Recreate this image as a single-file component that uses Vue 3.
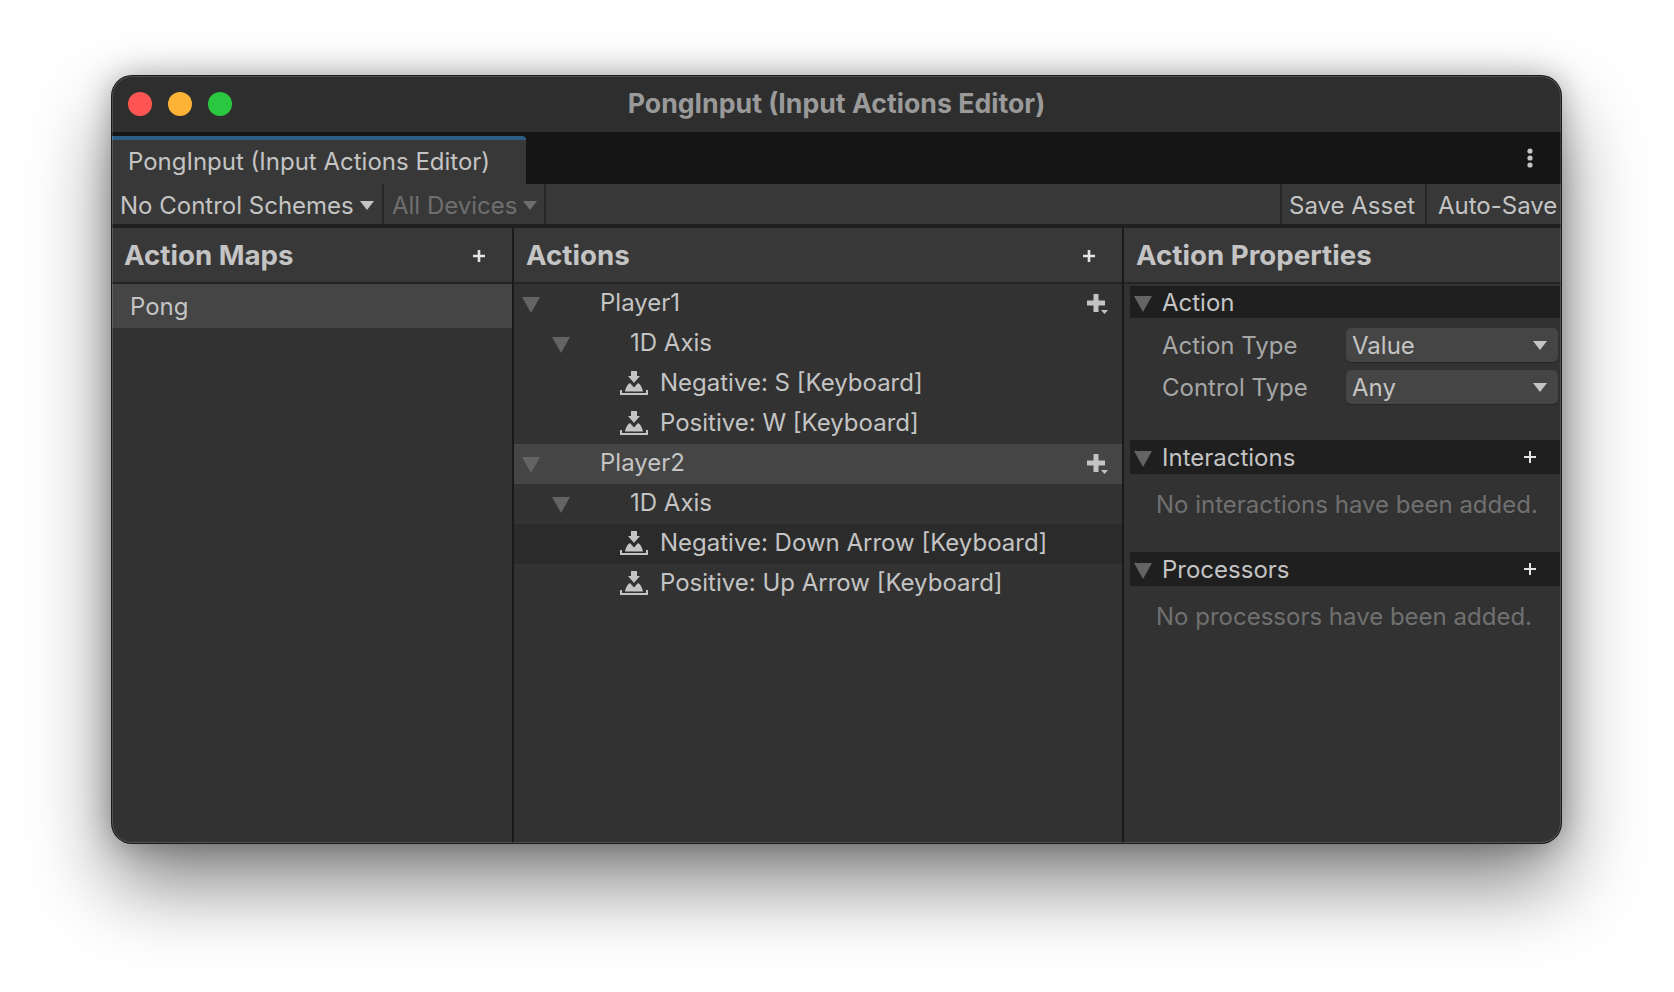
<template>
  <div class="stage">
    <div class="window">
      <header class="titlebar">
        <div class="lights">
          <span class="light red"></span>
          <span class="light yellow"></span>
          <span class="light green"></span>
        </div>
        <span class="title">PongInput (Input Actions Editor)</span>
      </header>

      <div class="tabstrip">
        <div class="tab">PongInput (Input Actions Editor)</div>
        <svg class="kebab" viewBox="0 0 6 20" fill="#c4c4c4">
          <circle cx="3" cy="3" r="2.6"/>
          <circle cx="3" cy="10" r="2.6"/>
          <circle cx="3" cy="17" r="2.6"/>
        </svg>
      </div>

      <div class="toolbar">
        <div class="tool schemes">No Control Schemes<i class="caret"></i></div>
        <div class="tool devices">All Devices<i class="caret"></i></div>
        <div class="spacer"></div>
        <div class="tool save">Save Asset</div>
        <div class="tool autosave">Auto-Save</div>
      </div>

      <div class="panes">
        <section class="pane maps">
          <div class="pane-head">
            <h2>Action Maps</h2>
            <svg class="plus head-plus" viewBox="0 0 12 12"><path d="M6 0v12M0 6h12"/></svg>
          </div>
          <div class="map-row">Pong</div>
        </section>

        <section class="pane actions">
          <div class="pane-head">
            <h2>Actions</h2>
            <svg class="plus head-plus" viewBox="0 0 12 12"><path d="M6 0v12M0 6h12"/></svg>
          </div>
          <div
            v-for="row in rows"
            :key="row.id"
            class="tree-row"
            :class="[row.kind, { hover: row.hover, dim: row.dim }]"
          >
            <i v-if="row.kind !== 'binding'" class="arrow"></i>
            <svg v-else class="bind-icon" viewBox="0 0 28 24" fill="#c4c4c4">
              <path d="M11 0h6v5h3l-6 7-6-7h3z"/>
              <path d="M5 20.500C6 15.500 8 13 10 12l4 4.500 4-4.500c2 1 4 3.500 5 8.500z"/>
              <path d="M0 19h2v3h24v-3h2v5H0z"/>
            </svg>
            <span class="label">{{ row.label }}</span>
            <svg v-if="row.kind === 'action'" class="add-binding" viewBox="0 0 24 20" fill="#c4c4c4">
              <path d="M7.500 0h5v6.500H19v5h-6.500V18h-5v-6.500H1v-5h6.500z"/>
              <path d="M15 16h7l-3.500 4z"/>
            </svg>
          </div>
        </section>

        <section class="pane props">
          <div class="pane-head">
            <h2>Action Properties</h2>
          </div>
          <div class="group-head first">
            <i class="arrow"></i>
            <span>Action</span>
          </div>
          <div class="field">
            <label>Action Type</label>
            <div class="select">Value<i class="caret"></i></div>
          </div>
          <div class="field">
            <label>Control Type</label>
            <div class="select">Any<i class="caret"></i></div>
          </div>
          <template v-for="g in groups" :key="g.title">
            <div class="group-head">
              <i class="arrow"></i>
              <span>{{ g.title }}</span>
              <svg class="plus group-plus" viewBox="0 0 12 12"><path d="M6 0v12M0 6h12"/></svg>
            </div>
            <p class="empty">{{ g.empty }}</p>
          </template>
        </section>
      </div>
    </div>
  </div>
</template>

<script setup>
const rows = [
  { id: 1, kind: 'action', label: 'Player1' },
  { id: 2, kind: 'composite', label: '1D Axis' },
  { id: 3, kind: 'binding', label: 'Negative: S [Keyboard]' },
  { id: 4, kind: 'binding', label: 'Positive: W [Keyboard]' },
  { id: 5, kind: 'action', label: 'Player2', hover: true },
  { id: 6, kind: 'composite', label: '1D Axis' },
  { id: 7, kind: 'binding', label: 'Negative: Down Arrow [Keyboard]', dim: true },
  { id: 8, kind: 'binding', label: 'Positive: Up Arrow [Keyboard]' },
];

const groups = [
  { title: 'Interactions', empty: 'No interactions have been added.' },
  { title: 'Processors', empty: 'No processors have been added.' },
];
</script>

<style>
html, body { margin: 0; background: #fff; }
</style>

<style scoped>
.stage {
  width: 1674px;
  height: 992px;
  box-sizing: border-box;
  padding: 76px 113px 149px 112px;
  overflow: hidden;
  font-family: Inter, "Liberation Sans", sans-serif;
  font-size: 24px;
  color: #c4c4c4;
}

.window {
  height: 100%;
  display: flex;
  flex-direction: column;
  position: relative;
  background: #323232;
  border-radius: 20px;
  overflow: hidden;
  box-shadow: 0 0 0 1px #1a1a1a, 0 40px 80px rgba(0, 0, 0, 0.5), 0 0 30px rgba(0, 0, 0, 0.3);
}
/* thin light edge that sits over the panes */
.window::after {
  content: "";
  position: absolute;
  inset: 0;
  border-radius: inherit;
  box-shadow: inset 0 0 0 1px rgba(255, 255, 255, 0.16);
  pointer-events: none;
}

.titlebar {
  height: 56px;
  flex-shrink: 0;
  box-sizing: border-box;
  padding-bottom: 2px;
  background: #2e2e2e;
  display: flex;
  align-items: center;
  justify-content: center;
  position: relative;
}
.lights {
  position: absolute;
  left: 16px;
  top: 16px;
  display: flex;
  gap: 16px;
}
.light { width: 24px; height: 24px; border-radius: 50%; }
.red { background: #ff5552; }
.yellow { background: #fdb435; }
.green { background: #2ac840; }
.title {
  font-size: 26.7px;
  font-weight: 700;
  color: #9a9a9a;
}

.tabstrip {
  height: 52px;
  flex-shrink: 0;
  box-sizing: border-box;
  padding-top: 4px;
  background: #151515;
  display: flex;
  align-items: stretch;
  justify-content: space-between;
}
.tab {
  width: 414px;
  box-sizing: border-box;
  padding: 0 0 2px 16px;
  background: #383838;
  border-top: 4px solid #2c5d87;
  border-top-right-radius: 4px;
  display: flex;
  align-items: center;
}
.kebab {
  width: 6px;
  height: 20px;
  margin: 12px 28px 0 0;
}

.toolbar {
  height: 40px;
  flex-shrink: 0;
  display: flex;
  background: #383838;
  border-bottom: 4px solid #1f1f1f;
}
.tool {
  display: flex;
  align-items: center;
  box-sizing: border-box;
  padding-top: 2px;
  border-right: 2px solid #282828;
  white-space: nowrap;
}
.schemes { width: 272px; padding-left: 8px; }
.devices { width: 162px; padding-left: 8px; color: #6f6f6f; }
.devices .caret { border-top-color: #6f6f6f; }
.spacer { width: 734px; border-right: 2px solid #282828; }
.save { width: 145px; padding-left: 7px; }
.autosave { flex: 1; padding-left: 11px; border-right: none; }
.caret {
  width: 0;
  height: 0;
  margin-left: 6px;
  border-left: 7.5px solid transparent;
  border-right: 7.5px solid transparent;
  border-top: 9px solid #c4c4c4;
}

.panes { flex: 1; display: flex; min-height: 0; }
.pane { box-sizing: border-box; border-right: 2px solid #1a1a1a; }
.maps { width: 402px; }
.actions { width: 610px; }
.props { flex: 1; border-right: none; }

.pane-head {
  height: 56px;
  box-sizing: border-box;
  border-bottom: 2px solid #232323;
  background: #383838;
  display: flex;
  align-items: center;
  justify-content: space-between;
  padding: 0 27px 0 12px;
}
.pane-head h2 {
  margin: 0;
  font-size: 27.7px;
  font-weight: 700;
  color: #c4c4c4;
}
.plus { stroke: #e4e4e4; stroke-width: 2; fill: none; }
.head-plus { width: 12px; height: 12px; margin-top: 2px; stroke-width: 2.6; }

.map-row {
  height: 44px;
  padding-left: 18px;
  background: #454545;
  display: flex;
  align-items: center;
}

.tree-row {
  height: 40px;
  display: flex;
  align-items: center;
  position: relative;
}
.tree-row.hover { background: #454545; }
.tree-row.dim { background: #2b2b2b; }
.tree-row .label { position: absolute; top: 4px; }
.action .label { left: 86px; }
.composite .label { left: 116px; }
.binding .label { left: 146px; }
.action .arrow { margin: 1px 0 0 8px; }
.composite .arrow { margin: 1px 0 0 38px; }
.bind-icon {
  width: 28px;
  height: 24px;
  margin: -2px 0 0 106px;
}
.add-binding {
  position: absolute;
  right: 12px;
  top: 10px;
  width: 24px;
  height: 20px;
}
.arrow {
  display: block;
  width: 0;
  height: 0;
  flex-shrink: 0;
  border-left: 9px solid transparent;
  border-right: 9px solid transparent;
  border-top: 16px solid #646464;
}

.group-head {
  height: 34px;
  margin: 0 1px 0 6px;
  padding-left: 4px;
  background: #1f1f1f;
  display: flex;
  align-items: center;
  position: relative;
}
.group-head.first { margin-top: 2px; margin-bottom: 10px; height: 32px; }
.group-head .arrow { margin-top: 3px; }
.group-head span { margin-left: 10px; }
.group-plus {
  position: absolute;
  right: 24px;
  top: 11px;
  width: 12px;
  height: 12px;
}

.field {
  height: 34px;
  margin: 0 3px 8px 0;
  padding-left: 38px;
  display: flex;
  align-items: center;
  justify-content: space-between;
}
.field label { color: #a6a6a6; }
.select {
  width: 212px;
  height: 34px;
  box-sizing: border-box;
  padding: 0 11px 0 6px;
  background: #454545;
  border-radius: 5px;
  box-shadow: 0 1px 1px #262626;
  display: flex;
  align-items: center;
  justify-content: space-between;
  color: #c4c4c4;
}
.field + .field { margin-bottom: 36px; }

.empty {
  height: 78px;
  margin: 0;
  padding: 16px 0 0 32px;
  box-sizing: border-box;
  color: #707070;
}
</style>
